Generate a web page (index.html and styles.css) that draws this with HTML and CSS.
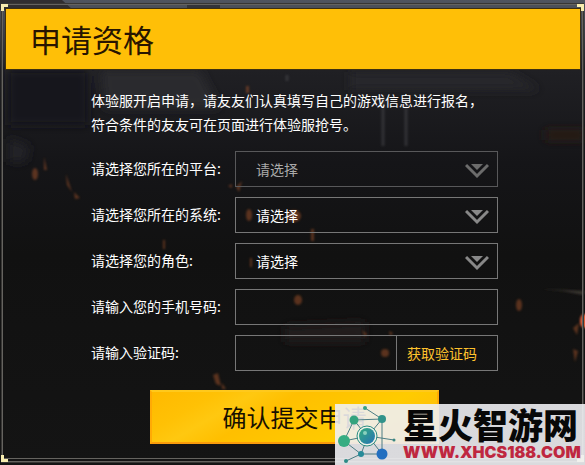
FILE: index.html
```html
<!DOCTYPE html>
<html lang="zh-CN">
<head>
    <meta charset="UTF-8">
    <meta name="viewport" content="width=device-width, initial-scale=1.0">
    <title>申请资格</title>
    <link rel="stylesheet" href="styles.css">
</head>
<body>
    <svg class="scene" viewBox="0 0 585 465" preserveAspectRatio="none" aria-hidden="true">
        <defs>
            <linearGradient id="sky" x1="0" y1="0" x2="0" y2="1">
                <stop offset="0" stop-color="#50555f"/>
                <stop offset="0.15" stop-color="#202024"/>
                <stop offset="0.35" stop-color="#151518"/>
                <stop offset="0.55" stop-color="#111"/>
                <stop offset="1" stop-color="#141414"/>
            </linearGradient>
            <filter id="haze" x="-50%" y="-50%" width="200%" height="200%"><feGaussianBlur stdDeviation="5"/></filter>
            <filter id="glow" x="-100%" y="-100%" width="300%" height="300%"><feGaussianBlur stdDeviation="1"/></filter>
        </defs>
        <rect width="585" height="465" fill="url(#sky)"/>
        <path d="M0 0h62l11 10H0z" fill="#302e30"/>
        <path d="M187 5h33v5h-33z" fill="#33343a"/>
        <g filter="url(#haze)">
            <path d="M100 70h100l20 38H105z" fill="#29292d"/>
            <path d="M350 72h160l30 18H350z" fill="#27272c"/>
            <path d="M8 70h80v55H8z" fill="#19191b"/>
            <path d="M8 138l22 8-4 16H8z" fill="#222228"/>
            <path d="M285 326l80-4v20h-80z" fill="#211d1d"/>
            <path d="M545 130h40v10h-40z" fill="#2b1d19"/>
        </g>
        <g fill="none" stroke="#56575c" stroke-width="3" filter="url(#glow)" opacity="0.4">
            <path d="M383 98v48M406 98v48M287 75v6"/>
        </g>
        <g fill="#a3532a" filter="url(#glow)" opacity="0.5">
            <ellipse cx="35" cy="174" rx="3" ry="6"/>
            <path d="M44 157l3 13h-3zM66 174l6 18-5-7zM74 192l6 6-5 1z"/>
            <path d="M236 187l6-6-3 11zM228 186l4-2v4z"/>
            <ellipse cx="249" cy="215" rx="3" ry="6"/>
            <ellipse cx="294" cy="216" rx="7" ry="6"/>
            <path d="M311 229h3v12h-3zM163 240h2v9h-2zM250 258h2v9h-2zM246 86h3v7h-3z"/>
            <ellipse cx="298" cy="300" rx="4" ry="5"/>
            <ellipse cx="519" cy="305" rx="3" ry="6"/>
            <ellipse cx="385" cy="353" rx="4" ry="4"/>
            <path d="M213 375l5-2 3 13-5-2zM222 383l4 6h-4z"/>
            <path d="M362 330l5 4-2 3zM389 331l4 2-3 3zM573 328l6-5-2 12zM573 349l5 2-3 11z"/>
        </g>
        <g fill="#e0603a" filter="url(#glow)">
            <ellipse cx="584" cy="321" rx="4" ry="7"/>
        </g>
        <path d="M540 289l45 2-2 4-20-4zM35 273l25-3" fill="#39342f" filter="url(#glow)"/>
    </svg>

    <main class="panel">
        <span class="corner top-left"></span>
        <span class="corner top-right"></span>
        <span class="corner bottom-left"></span>
        <span class="corner bottom-right"></span>

        <h1 class="panel-title">申请资格</h1>

        <form class="apply-form">
            <p class="intro">体验服开启申请，请友友们认真填写自己的游戏信息进行报名，<br>符合条件的友友可在页面进行体验服抢号。</p>

            <div class="row">
                <label for="platform">请选择您所在的平台:</label>
                <div class="field is-disabled">
                    <select id="platform" disabled><option>请选择</option></select>
                    <svg class="arrow" viewBox="0 0 24 16" aria-hidden="true"><path d="M1 2l11 11L23 2" fill="none" stroke="currentColor" stroke-width="3"/><path d="M6 1h12l-6 6z" fill="currentColor"/></svg>
                </div>
            </div>
            <div class="row">
                <label for="system">请选择您所在的系统:</label>
                <div class="field">
                    <select id="system"><option>请选择</option></select>
                    <svg class="arrow" viewBox="0 0 24 16" aria-hidden="true"><path d="M1 2l11 11L23 2" fill="none" stroke="currentColor" stroke-width="3"/><path d="M6 1h12l-6 6z" fill="currentColor"/></svg>
                </div>
            </div>
            <div class="row">
                <label for="role">请选择您的角色:</label>
                <div class="field">
                    <select id="role"><option>请选择</option></select>
                    <svg class="arrow" viewBox="0 0 24 16" aria-hidden="true"><path d="M1 2l11 11L23 2" fill="none" stroke="currentColor" stroke-width="3"/><path d="M6 1h12l-6 6z" fill="currentColor"/></svg>
                </div>
            </div>
            <div class="row">
                <label for="phone">请输入您的手机号码:</label>
                <div class="field"><input type="tel" id="phone"></div>
            </div>
            <div class="row">
                <label for="code">请输入验证码:</label>
                <div class="field">
                    <input type="text" id="code">
                    <button type="button" class="code-button">获取验证码</button>
                </div>
            </div>

            <button type="submit" class="submit-button">确认提交申请</button>
        </form>
    </main>

    <aside class="site-badge">
        <svg class="badge-logo" viewBox="0 0 60 60" aria-hidden="true">
            <defs>
                <linearGradient id="net" x1="0" y1="0" x2="1" y2="1">
                    <stop offset="0" stop-color="#35ad7e"/>
                    <stop offset="1" stop-color="#2672b4"/>
                </linearGradient>
            </defs>
            <path d="M28 4L45 15V50L24 50L7 37L17 16L45 15M17 16L28 30M45 15L31 32L45 50M7 37L31 32L57 36M31 32L24 50L9 57" fill="none" stroke="#4c7d84" stroke-width="1"/>
            <circle cx="30" cy="32" r="10" fill="#f0f3e9" stroke="#2a8b81" stroke-width="1"/>
            <circle cx="30" cy="32" r="8" fill="url(#net)"/>
            <circle cx="28" cy="29" r="2" fill="#8ad0bd"/>
            <circle cx="7" cy="37" r="6" fill="#36ad82"/>
            <circle cx="17" cy="16" r="4.5" fill="#34a37e"/>
            <circle cx="45" cy="15" r="4" fill="#31938a"/>
            <circle cx="45" cy="50" r="5.5" fill="#236fc0"/>
            <circle cx="24" cy="50" r="3" fill="#278b99"/>
            <circle cx="28" cy="4" r="2" fill="#35a083"/>
            <circle cx="57" cy="36" r="1.5" fill="#3a8681"/>
            <circle cx="9" cy="57" r="2" fill="#2a8b86"/>
        </svg>
        <div class="badge-text">
            <strong class="badge-name">星火智游网</strong>
            <span class="badge-url">WWW.XHCS188.COM</span>
        </div>
    </aside>
</body>
</html>
```

FILE: styles.css
```css
* {
    box-sizing: border-box;
}
body {
    margin: 0;
    padding: 4px 2px 2px;
    background-color: #141414;
    color: #fff;
    font-family: "Noto Sans CJK SC", sans-serif;
    font-size: 14px;
    line-height: 24px;
}
.scene {
    position: absolute;
    top: 0;
    left: 0;
    width: 100%;
    height: 100%;
    z-index: -1;
}
.panel {
    position: relative;
    padding: 4px 2px 0 3px;
    border: 1px solid #65635f;
    border-bottom: 4px double #65635f;
    outline: 1px solid #383735;
}
.corner {
    position: absolute;
    width: 7px;
    height: 7px;
    border: 0 solid #f8edb0;
}
.top-left {
    top: -1px;
    left: -2px;
    border-width: 3px 0 0 3px;
}
.top-right {
    top: -1px;
    right: -2px;
    border-width: 3px 3px 0 0;
}
.bottom-left {
    bottom: -4px;
    left: -2px;
    border-width: 0 0 3px 3px;
}
.bottom-right {
    bottom: -4px;
    right: -2px;
    border-width: 0 3px 3px 0;
}
.panel-title {
    position: relative;
    margin: 0;
    padding: 0 24px;
    background-color: #ffbf07;
    outline: 1px solid #3e3010;
    color: #281500;
    font-size: 31px;
    font-weight: 400;
    line-height: 60px;
}
.apply-form {
    padding: 19px 82px 14px 85px;
}
.intro {
    margin: 0 -20px 15px 0;
}
.row {
    display: flex;
    align-items: center;
    margin-bottom: 10px;
}
.row label {
    flex: 0 0 144px;
    padding-bottom: 2px;
}
.field {
    position: relative;
    display: flex;
    flex: 1;
    min-width: 0;
    height: 36px;
    border: 1px solid #777;
}
.field select,
.field input {
    flex: 1;
    min-width: 0;
    padding: 0 20px;
    border: 0;
    outline: 0;
    background: transparent;
    color: #fff;
    font: inherit;
    appearance: none;
}
.field option {
    background-color: #141414;
}
.is-disabled {
    border-color: #58585a;
}
.is-disabled select {
    color: #aaa;
    opacity: 1;
}
.arrow {
    position: absolute;
    top: 11px;
    right: 8px;
    width: 24px;
    height: 16px;
    color: #888;
    pointer-events: none;
}
.is-disabled .arrow {
    color: #6c6c6c;
}
.code-button {
    flex: 0 0 101px;
    padding: 0 10px;
    border: 0;
    border-left: 1px solid #777;
    background: transparent;
    color: #ffc22d;
    font: inherit;
    text-align: left;
    cursor: pointer;
}
.submit-button {
    display: block;
    width: 289px;
    height: 54px;
    margin: 19px auto 0 59px;
    padding: 0;
    border: 2px solid #ffaa05;
    border-top-color: #ffc91c;
    border-bottom-color: #f99b0b;
    background: linear-gradient(150deg, #ffb900 0%, #ffc105 18%, #ffc810 28%, #ffbf00 40%, #ffcb00 70%, #ffb70e 100%);
    color: #171000;
    font: inherit;
    font-size: 24px;
    cursor: pointer;
}
.site-badge {
    position: absolute;
    right: 0;
    bottom: 0;
    display: flex;
    width: 250px;
    height: 61px;
    padding-left: 2px;
    background-color: rgba(240, 240, 243, 0.9);
}
.badge-logo {
    flex: 0 0 60px;
    height: 60px;
}
.badge-text {
    display: flex;
    flex-direction: column;
    padding: 1px 0 0 6px;
    white-space: nowrap;
}
.badge-name {
    color: #080808;
    font-size: 35px;
    font-weight: 900;
    line-height: 38px;
}
.badge-url {
    color: #bf2740;
    font-family: Inter, "Liberation Sans", sans-serif;
    font-size: 16px;
    font-weight: 900;
    line-height: 18px;
}
```
